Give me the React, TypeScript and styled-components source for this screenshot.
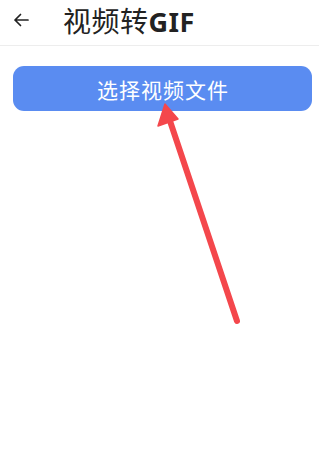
import React from "react";
import styled, { createGlobalStyle } from "styled-components";

const Global = createGlobalStyle`
  html, body { margin: 0; padding: 0; background: #ffffff; }
  body { font-family: "Noto Sans CJK SC", "Noto Sans", sans-serif; }
  #root { min-height: 467px; }
`;

const Page = styled.div`
  position: relative;
  width: 319px;
  height: 467px;
  background: #ffffff;
  overflow: hidden;
`;

const Header = styled.header`
  display: flex;
  align-items: center;
  height: 46px;
  box-sizing: border-box;
  padding: 0 0 5px 13px;
  border-bottom: 1px solid #ededed;
  gap: 34px;
`;

const BackButton = styled.button`
  display: flex;
  align-items: center;
  justify-content: center;
  width: 16px;
  height: 16px;
  padding: 0;
  border: none;
  background: none;
  color: #222;
`;

const Title = styled.h1`
  margin: 0;
  font-size: 28px;
  font-weight: 400;
  color: #222222;
  line-height: 1;
  letter-spacing: 0.5px;
`;

const Latin = styled.span`
  font-family: "Noto Sans", sans-serif;
  font-weight: 700;
  font-size: 27px;
`;

const Content = styled.main`
  padding: 20px 7px 0 13px;
`;

const PrimaryButton = styled.button`
  display: flex;
  align-items: center;
  justify-content: center;
  width: 100%;
  height: 45px;
  border: none;
  border-radius: 11px;
  background: #5a8cf1;
  color: #ffffff;
  font-family: "Noto Sans CJK SC", sans-serif;
  font-size: 21px;
  letter-spacing: 1px;
  padding: 0 0 0 1px;
`;

const Annotation = styled.svg`
  position: absolute;
  left: 0;
  top: 0;
  pointer-events: none;
`;

export default function App() {
  return (
    <Page>
      <Global />
      <Header>
        <BackButton aria-label="返回">
          <svg width="16" height="14" viewBox="0 0 16 14" fill="none">
            <path d="M15 7H2M7.5 1.5L2 7l5.5 5.5" stroke="#222" strokeWidth="1.7" strokeLinecap="round" strokeLinejoin="round" />
          </svg>
        </BackButton>
        <Title>
          视频转<Latin>GIF</Latin>
        </Title>
      </Header>
      <Content>
        <PrimaryButton>选择视频文件</PrimaryButton>
      </Content>
      <Annotation width="319" height="467" viewBox="0 0 319 467">
        <line x1="169" y1="118" x2="237" y2="321" stroke="#f4474c" strokeWidth="6" strokeLinecap="round" />
        <polygon points="165,104 158,126 178,119" fill="#f4474c" stroke="#f4474c" strokeWidth="1.5" strokeLinejoin="round" />
      </Annotation>
    </Page>
  );
}
